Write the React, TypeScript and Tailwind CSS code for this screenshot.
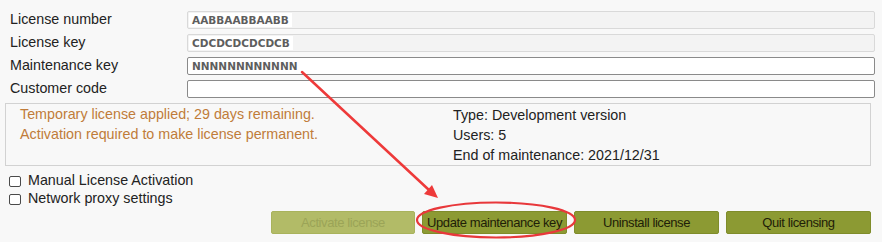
import type { ReactNode } from "react";

const FIELDS = [
  { label: "License number", value: "AABBAABBAABB", readOnly: true },
  { label: "License key", value: "CDCDCDCDCDCB", readOnly: true },
  { label: "Maintenance key", value: "NNNNNNNNNNNN", readOnly: false },
  { label: "Customer code", value: "", readOnly: false },
];

const BUTTONS = [
  { label: "Activate license", disabled: true },
  { label: "Update maintenance key", disabled: false },
  { label: "Uninstall license", disabled: false },
  { label: "Quit licensing", disabled: false },
];

function Field({ value, readOnly }: { value: string; readOnly: boolean }) {
  return (
    <div
      className={
        readOnly
          ? "flex h-[18px] items-center rounded-[2px] border border-[#d9d9d9] bg-[#f3f3f3] px-[1px]"
          : "flex h-[18px] items-center rounded-[2px] border border-[#8a8a8a] bg-white px-[1px]"
      }
    >
      {value && (
        <span className="bg-white px-[3px] font-['DejaVu_Sans',sans-serif] text-[10.5px] font-bold leading-[14px] text-[#5e5e5e]">
          {value}
        </span>
      )}
    </div>
  );
}

function Check({ children }: { children: ReactNode }) {
  return (
    <label className="flex h-[18px] items-center gap-[7px]">
      <span className="h-[11px] w-[12px] rounded-[2px] border border-[#4a4a4a] bg-white" />
      <span>{children}</span>
    </label>
  );
}

export default function App() {
  return (
    <div className="relative h-[242px] w-[882px] overflow-hidden bg-[#f8f8f8] font-['Liberation_Sans',Arial,sans-serif] text-[14.3px] text-[#222]">
      <div className="grid grid-cols-[177px_1fr] gap-y-[5px] pl-[10px] pr-[7px] pt-[11px]">
        {FIELDS.map((f) => (
          <div key={f.label} className="contents">
            <div className="flex h-[18px] items-center">{f.label}</div>
            <Field value={f.value} readOnly={f.readOnly} />
          </div>
        ))}
      </div>

      <div className="ml-[5px] mr-[11px] mt-[5px] flex border border-[#d2d2d2] leading-[19.5px]">
        <div className="w-[447px] pl-[14px] pt-[1px] text-[#c07c3a]">
          <div>Temporary license applied; 29 days remaining.</div>
          <div>Activation required to make license permanent.</div>
        </div>
        <div className="pt-[1px] leading-[20px]">
          <div>Type: Development version</div>
          <div>Users: 5</div>
          <div>End of maintenance: 2021/12/31</div>
        </div>
      </div>

      <div className="mt-[6px] pl-[9px]">
        <Check>Manual License Activation</Check>
        <Check>Network proxy settings</Check>
      </div>

      <div className="mr-[11px] mt-[3px] flex justify-end gap-[7px]">
        {BUTTONS.map((b) => (
          <button
            key={b.label}
            className={
              b.disabled
                ? "h-[23px] w-[144px] whitespace-nowrap rounded-[2px] border border-[#a9b35c] bg-[#b2bb67] px-0 text-[13px] tracking-[-0.4px] text-[#9ba457]"
                : "h-[23px] w-[145px] whitespace-nowrap rounded-[2px] border border-[#7f8c2a] bg-[#8c9a33] px-0 text-[13px] tracking-[-0.4px] text-[#1e2008]"
            }
          >
            {b.label}
          </button>
        ))}
      </div>

      <svg
        className="pointer-events-none absolute left-0 top-0"
        width="882"
        height="242"
        viewBox="0 0 882 242"
      >
        <line x1="302" y1="72" x2="429" y2="190" stroke="#ee3a3a" strokeWidth="2.5" strokeLinecap="round" />
        <polygon points="438,198 424,194 432,185" fill="#ee3a3a" />
        <ellipse
          cx="496"
          cy="220"
          rx="79"
          ry="17.5"
          fill="none"
          stroke="#e8383b"
          strokeWidth="2.2"
        />
      </svg>
    </div>
  );
}
